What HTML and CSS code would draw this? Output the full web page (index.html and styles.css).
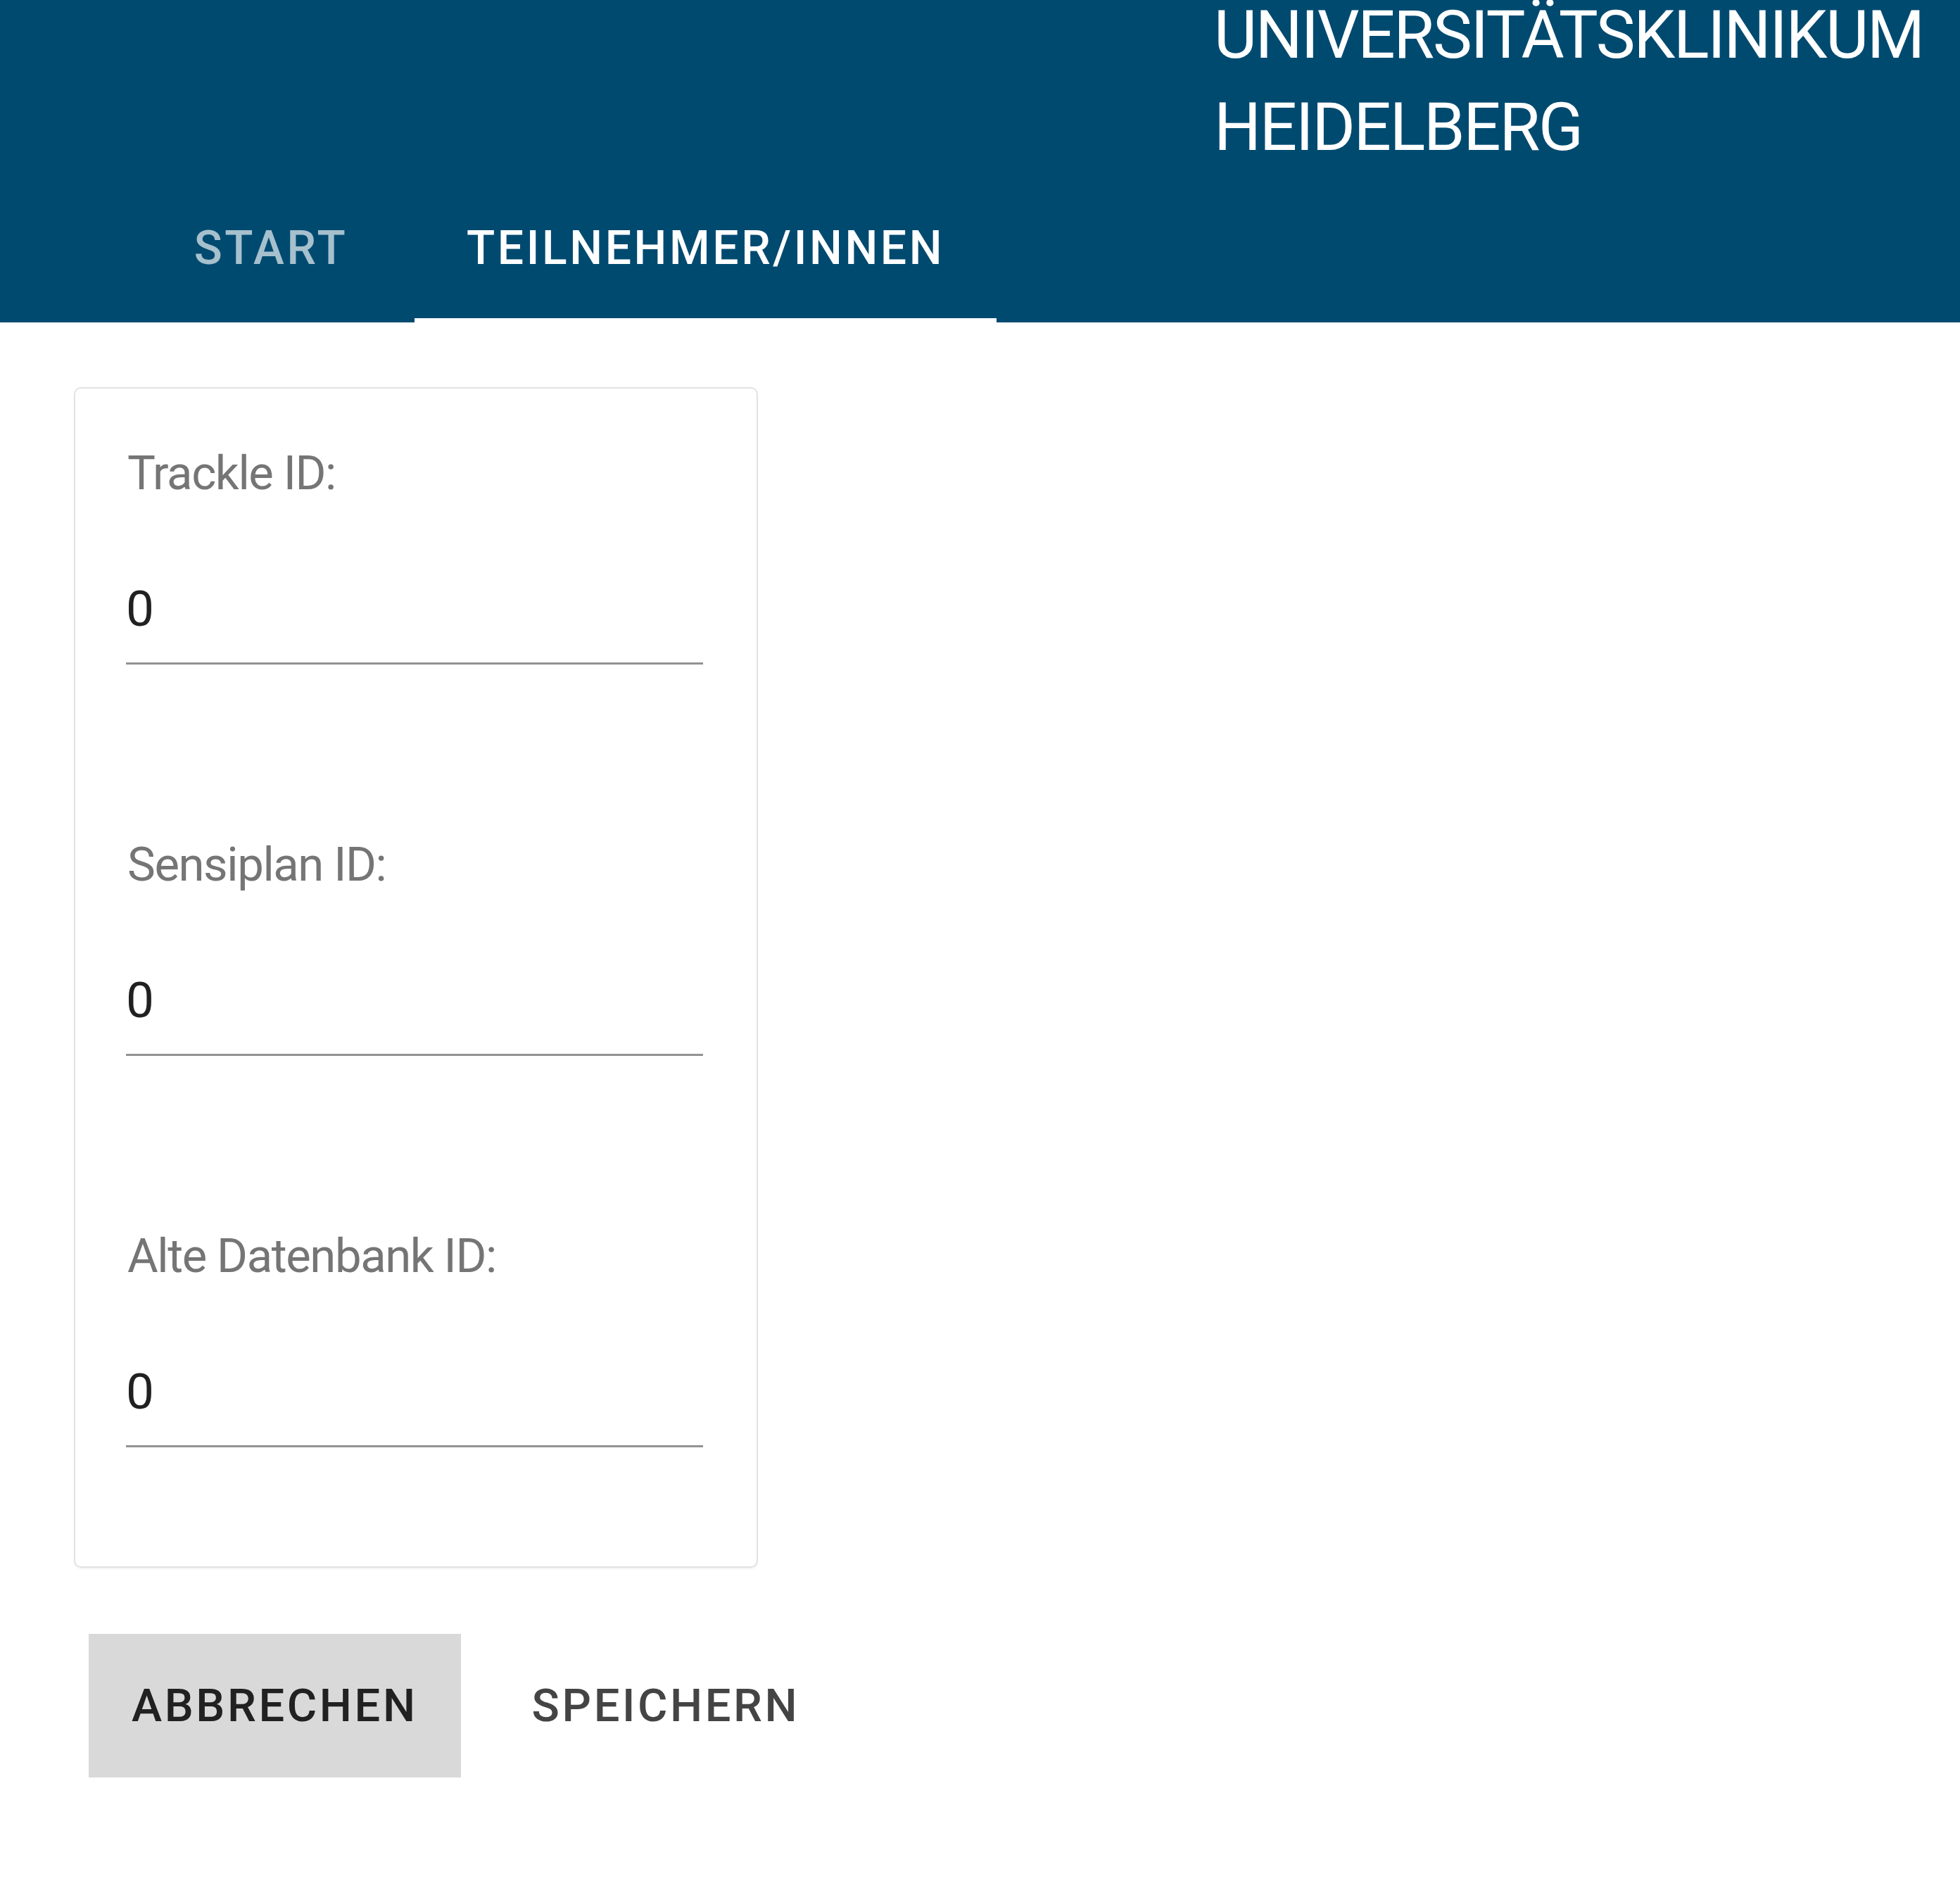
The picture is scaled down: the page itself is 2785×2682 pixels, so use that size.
FILE: index.html
```html
<!DOCTYPE html>
<html lang="de">
<head>
<meta charset="utf-8">
<title>Teilnehmer/innen</title>
<link rel="stylesheet" href="styles.css">
</head>
<body>
<header class="app-header">
  <div class="brand">
    <div class="brand-title">UNIVERSITÄTSKLINIKUM<br>HEIDELBERG</div>
  </div>
  <nav class="tabs">
    <div class="tab">START</div>
    <div class="tab tab-active">TEILNEHMER/INNEN</div>
  </nav>
</header>
<main class="content">
  <section class="card">
    <div class="field">
      <div class="field-label">Trackle ID:</div>
      <div class="field-input">0</div>
    </div>
    <div class="field">
      <div class="field-label">Sensiplan ID:</div>
      <div class="field-input">0</div>
    </div>
    <div class="field">
      <div class="field-label">Alte Datenbank ID:</div>
      <div class="field-input">0</div>
    </div>
  </section>
  <div class="actions">
    <button class="btn btn-filled">ABBRECHEN</button>
    <button class="btn btn-text">SPEICHERN</button>
  </div>
</main>
</body>
</html>
```

FILE: styles.css
```css
* { box-sizing: border-box; }
html, body { margin: 0; padding: 0; background: #ffffff; }
body { font-family: Roboto, "Noto Sans", Arial, sans-serif; }

.app-header {
  background: #004a70;
  height: 458px;
  overflow: hidden;
}
.brand {
  display: flex;
  padding-left: 1725px;
  margin-top: -15px;
}
.brand-title {
  color: #ffffff;
  font-size: 94px;
  line-height: 131px;
  font-weight: 400;
  letter-spacing: -2.3px;
  white-space: nowrap;
}
.tabs {
  display: flex;
  padding-left: 181px;
  height: 211px;
}
.tab {
  display: flex;
  align-items: center;
  justify-content: center;
  min-width: 408px;
  padding: 0 74px;
  font-size: 66px;
  font-weight: 500;
  letter-spacing: 3.6px;
  color: rgba(255, 255, 255, 0.65);
  white-space: nowrap;
}
.tab-active {
  color: #ffffff;
  border-bottom: 6px solid #ffffff;
  padding-top: 6px;
}

.content {
  padding: 92px 0 0 105px;
}
.card {
  width: 972px;
  border: 2px solid #e3e3e3;
  border-radius: 10px;
  box-shadow: 0 2px 2px rgba(0, 0, 0, 0.05);
  padding: 80px 76px 169px 72px;
}
.field + .field { margin-top: 244px; }
.field-label {
  font-size: 67px;
  line-height: 80px;
  letter-spacing: -1.4px;
  color: #757575;
  padding-left: 2px;
}
.field-input {
  margin-top: 111px;
  font-size: 71px;
  line-height: 84px;
  color: #212121;
  padding-bottom: 34px;
  border-bottom: 3px solid #929292;
}

.actions {
  display: flex;
  gap: 40px;
  padding: 94px 0 0 21px;
}
.btn {
  border: 0;
  margin: 0;
  height: 204px;
  padding: 0 61px;
  font-family: Roboto, "Noto Sans", Arial, sans-serif;
  font-size: 65px;
  font-weight: 500;
  letter-spacing: 3.6px;
  background: transparent;
  color: #212121;
}
.btn-filled { background: #d9d9d9; }
.btn-text { color: #444444; }
```
